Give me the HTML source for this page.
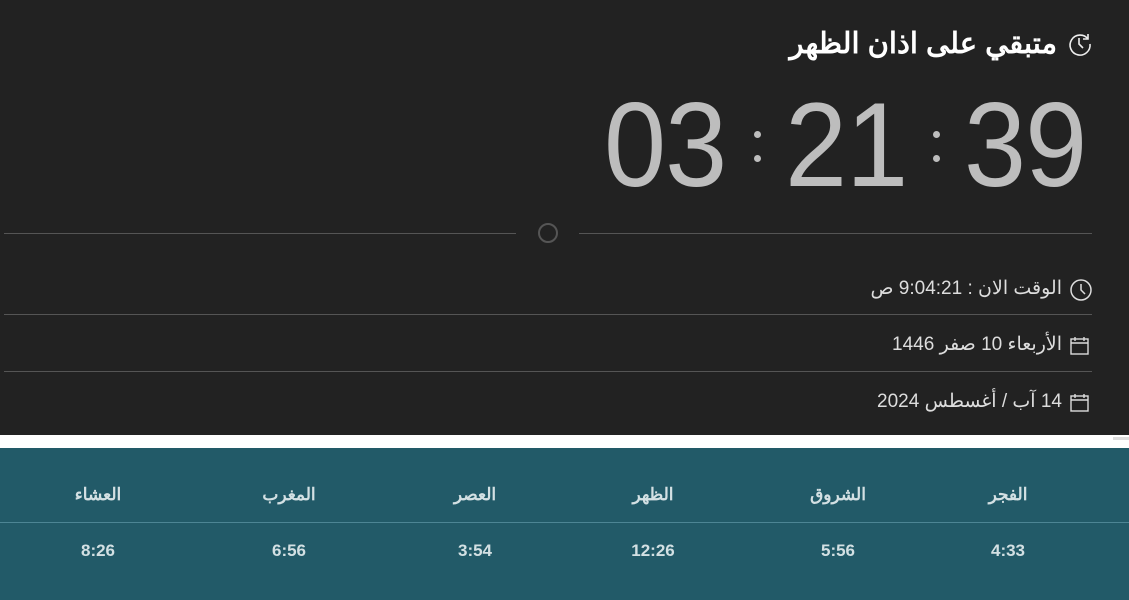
<!DOCTYPE html>
<html><head><meta charset="utf-8"><style>
body{margin:0;width:1129px;height:600px;overflow:hidden;background:#fff;font-family:"Liberation Sans","Noto Sans CJK SC",sans-serif;position:relative}
.dark{position:absolute;left:0;top:0;width:1129px;height:435px;background:#222}
.t{position:absolute;white-space:nowrap}
.d{position:absolute;color:#bdbdbd;font-size:120px;line-height:1;top:85px;font-weight:300;letter-spacing:-1px;transform:scaleX(0.93);transform-origin:left top}
.c{position:absolute;width:7px;height:7px;border-radius:50%;background:#bdbdbd}
.hl{position:absolute;height:1px;background:#555}
.teal{position:absolute;left:0;top:448px;width:1129px;height:152px;background:#225a68}
.h{position:absolute;color:#d3e0e3;font-weight:bold;font-size:17px;transform:translateX(-50%);white-space:nowrap}
.info{position:absolute;right:67px;color:#ddd;font-size:19px;direction:rtl;white-space:nowrap}
</style></head><body>
<div class="dark"></div>
<div class="t" style="right:72px;top:26px;color:#fff;font-size:29px;font-weight:bold;direction:rtl">متبقي على اذان الظهر</div>
<svg style="position:absolute;left:1067px;top:31px" width="26" height="26" viewBox="0 0 26 26" fill="none" stroke="#eee" stroke-width="1.6"><path d="M21 8 A10 10 0 1 0 23 13"/><path d="M21 3v5h-5"/><path d="M12 7v6l4 4"/></svg>
<div class="d" style="left:604px">03</div>
<div class="d" style="left:785px">21</div>
<div class="d" style="left:964px">39</div>
<div class="c" style="left:754px;top:131px"></div><div class="c" style="left:754px;top:155px"></div>
<div class="c" style="left:933px;top:131px"></div><div class="c" style="left:933px;top:155px"></div>
<div class="hl" style="left:4px;width:512px;top:233px"></div>
<div class="hl" style="left:579px;width:513px;top:233px"></div>
<div style="position:absolute;left:538px;top:223px;width:16px;height:16px;border:2px solid #555;border-radius:50%"></div>
<div class="info" style="top:277px">الوقت الان : 9:04:21 ص</div>
<svg style="position:absolute;left:1069px;top:278px" width="24" height="24" viewBox="0 0 24 24" fill="none" stroke="#ddd" stroke-width="1.5"><circle cx="12" cy="12" r="10"/><path d="M12 6v6l4 4"/></svg>
<div class="hl" style="left:4px;width:1088px;top:314px"></div>
<div class="info" style="top:333px">الأربعاء 10 صفر 1446</div>
<svg style="position:absolute;left:1069px;top:335px" width="22" height="22" viewBox="0 0 22 22" fill="none" stroke="#ddd" stroke-width="1.4"><rect x="2" y="4" width="17" height="15"/><path d="M2 8h17M6 2v4M15 2v4"/></svg>
<div class="hl" style="left:4px;width:1088px;top:371px"></div>
<div class="info" style="top:390px">14 آب / أغسطس 2024</div>
<svg style="position:absolute;left:1069px;top:392px" width="22" height="22" viewBox="0 0 22 22" fill="none" stroke="#ddd" stroke-width="1.4"><rect x="2" y="4" width="17" height="15"/><path d="M2 8h17M6 2v4M15 2v4"/></svg>
<div style="position:absolute;left:1113px;top:437px;width:16px;height:3px;background:#ddd"></div>
<div class="teal"></div>
<div style="position:absolute;left:0;top:522px;width:1129px;height:1px;background:#4d8594"></div>
<div class="h" style="left:1008px;top:485px">الفجر</div>
<div class="h" style="left:838px;top:485px">الشروق</div>
<div class="h" style="left:653px;top:485px">الظهر</div>
<div class="h" style="left:475px;top:485px">العصر</div>
<div class="h" style="left:289px;top:485px">المغرب</div>
<div class="h" style="left:98px;top:485px">العشاء</div>
<div class="h" style="left:1008px;top:541px">4:33</div>
<div class="h" style="left:838px;top:541px">5:56</div>
<div class="h" style="left:653px;top:541px">12:26</div>
<div class="h" style="left:475px;top:541px">3:54</div>
<div class="h" style="left:289px;top:541px">6:56</div>
<div class="h" style="left:98px;top:541px">8:26</div>
</body></html>
